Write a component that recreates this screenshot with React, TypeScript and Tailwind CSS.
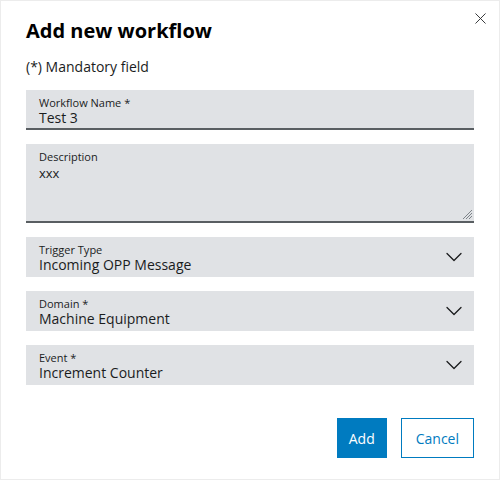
import { ChevronDown, X } from "lucide-react"

const font = { fontFamily: '"Open Sans", "Liberation Sans", sans-serif' }

function SelectField({ label, value }: { label: string; value: string }) {
  return (
    <div className="flex h-[40px] items-start justify-between bg-[#e0e2e5] pl-[13px] pr-[6px]">
      <div className="flex flex-col pt-[6px]">
        <span className="text-[11px] leading-[13px] text-[#1a1c1d]">{label}</span>
        <span className="text-[14px] leading-[17px] text-[#1a1c1d]">{value}</span>
      </div>
      <ChevronDown size={28} strokeWidth={1.1} className="mt-[6px] text-[#1a1c1d]" />
    </div>
  )
}

export default function App() {
  return (
    <div style={font} className="relative h-[480px] w-[500px] border border-[#ececec] bg-white px-[25px]">
      <button className="absolute right-[9px] top-[8px] text-[#2e3033]">
        <X size={19} strokeWidth={1.2} />
      </button>

      <h2 className="pt-[17px] text-[20px] font-bold leading-[26px] text-black">Add new workflow</h2>
      <p className="mt-[13px] text-[14px] leading-[19px] text-[#1a1c1d]">(*) Mandatory field</p>

      <div className="mt-[14px] flex flex-col gap-[14px]">
        <div className="flex h-[40px] flex-col border-b-2 border-[#595e62] bg-[#e0e2e5] pl-[13px] pt-[6px]">
          <span className="text-[11px] leading-[13px] text-[#1a1c1d]">Workflow Name *</span>
          <span className="text-[14px] leading-[17px] text-[#1a1c1d]">Test 3</span>
        </div>

        <div className="relative flex h-[79px] flex-col border-b-2 border-[#595e62] bg-[#e0e2e5] pl-[13px] pt-[6px]">
          <span className="text-[11px] leading-[14px] text-[#1a1c1d]">Description</span>
          <span className="text-[13px] leading-[18px] text-[#1a1c1d]">xxx</span>
          <svg width="12" height="12" viewBox="0 0 12 12" className="absolute bottom-[1px] right-[1px]">
            <path d="M11 2 L2 11 M11 5 L5 11 M11 8 L8 11" stroke="#7d8389" strokeWidth="1" />
          </svg>
        </div>

        <SelectField label="Trigger Type" value="Incoming OPP Message" />
        <SelectField label="Domain *" value="Machine Equipment" />
        <SelectField label="Event *" value="Increment Counter" />
      </div>

      <div className="mt-[33px] flex justify-end gap-[14px]">
        <button className="h-[40px] bg-[#007bc0] px-[12px] text-[14px] text-white">Add</button>
        <button className="h-[40px] border border-[#007bc0] px-[14px] text-[14px] text-[#007bc0]">Cancel</button>
      </div>
    </div>
  )
}
